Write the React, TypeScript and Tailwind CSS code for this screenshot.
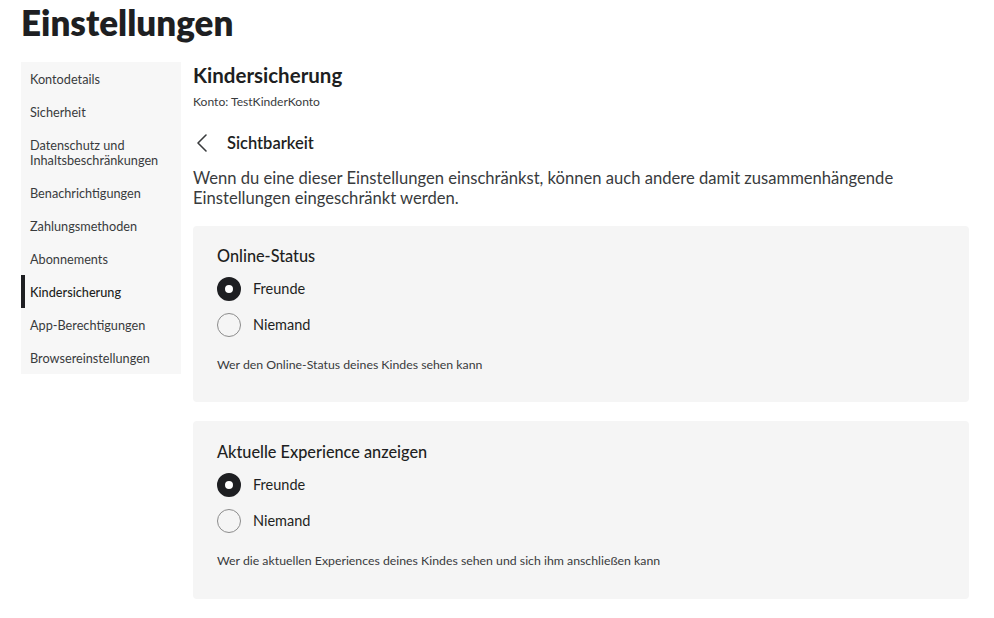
const sidebarItems = [
  "Kontodetails",
  "Sicherheit",
  "Datenschutz und Inhaltsbeschränkungen",
  "Benachrichtigungen",
  "Zahlungsmethoden",
  "Abonnements",
  "Kindersicherung",
  "App-Berechtigungen",
  "Browsereinstellungen",
];

interface RadioOptionProps {
  label: string;
  checked: boolean;
}

function RadioOption({ label, checked }: RadioOptionProps) {
  return (
    <div className="flex h-6 items-center gap-3">
      {checked ? (
        <span className="size-6 rounded-full border-[8px] border-[#1e1f22] bg-white" />
      ) : (
        <span className="size-6 rounded-full border border-[#8c8c8c]" />
      )}
      <span className="text-[14.5px] text-[#1e1f22]">{label}</span>
    </div>
  );
}

interface SettingCardProps {
  title: string;
  hint: string;
  extraTop?: boolean;
}

function SettingCard({ title, hint, extraTop }: SettingCardProps) {
  return (
    <div
      className={
        extraTop
          ? "rounded bg-[#f5f5f5] px-6 pt-[21px] pb-[30px]"
          : "rounded bg-[#f5f5f5] px-6 pt-5 pb-[29px]"
      }
    >
      <h3 className="text-[16.3px] leading-5 font-medium text-[#1e1f22]">
        {title}
      </h3>
      <div className="mt-[11px] flex flex-col gap-3">
        <RadioOption label="Freunde" checked />
        <RadioOption label="Niemand" checked={false} />
      </div>
      <p className="mt-[20px] text-[12.3px] leading-4 text-[#393b3d]">{hint}</p>
    </div>
  );
}

export default function App() {
  return (
    <div
      className="min-h-screen bg-white pl-[21px] pr-[25px]"
      style={{ fontFamily: "Lato, 'Noto Sans', sans-serif" }}
    >
      <h1 className="mt-[2px] text-[35px] leading-[40px] font-extrabold text-[#1e1f22]">
        Einstellungen
      </h1>

      <div className="mt-5 flex items-start gap-3">
        <nav className="w-[160px] shrink-0 bg-[#f7f7f7]">
          {sidebarItems.map((item) => (
            <div
              key={item}
              className={
                item === "Kindersicherung"
                  ? "border-l-4 border-[#1e1f22] pt-[10px] pb-[8px] pr-1 pl-[5px] text-[12.7px] leading-[15px] font-medium text-[#1e1f22]"
                  : "pt-[10px] pb-[8px] pr-1 pl-[9px] text-[12.7px] leading-[15px] text-[#393b3d]"
              }
            >
              {item}
            </div>
          ))}
        </nav>

        <main className="flex-1">
          <h2 className="text-[20.5px] leading-[26px] font-bold text-[#1e1f22]">
            Kindersicherung
          </h2>
          <p className="mt-[7px] text-[12.1px] leading-[14px] text-[#393b3d]">
            Konto: TestKinderKonto
          </p>

          <div className="mt-[22px] flex h-6 items-center gap-[18px]">
            <svg
              width="14"
              height="20"
              viewBox="0 0 14 20"
              fill="none"
              className="ml-[2px]"
            >
              <polyline
                points="11,2 3,10 11,18"
                stroke="#393b3d"
                strokeWidth="1.6"
                strokeLinecap="round"
                strokeLinejoin="round"
              />
            </svg>
            <span className="text-[16.5px] font-semibold text-[#1e1f22]">
              Sichtbarkeit
            </span>
          </div>

          <p className="mt-[13px] max-w-[740px] text-[16.6px] leading-5 text-[#393b3d]">
            Wenn du eine dieser Einstellungen einschränkst, können auch andere
            damit zusammenhängende Einstellungen eingeschränkt werden.
          </p>

          <div className="mt-[18px] flex flex-col gap-[19px]">
            <SettingCard
              title="Online-Status"
              hint="Wer den Online-Status deines Kindes sehen kann"
            />
            <SettingCard
              title="Aktuelle Experience anzeigen"
              hint="Wer die aktuellen Experiences deines Kindes sehen und sich ihm anschließen kann"
              extraTop
            />
          </div>
        </main>
      </div>
    </div>
  );
}
